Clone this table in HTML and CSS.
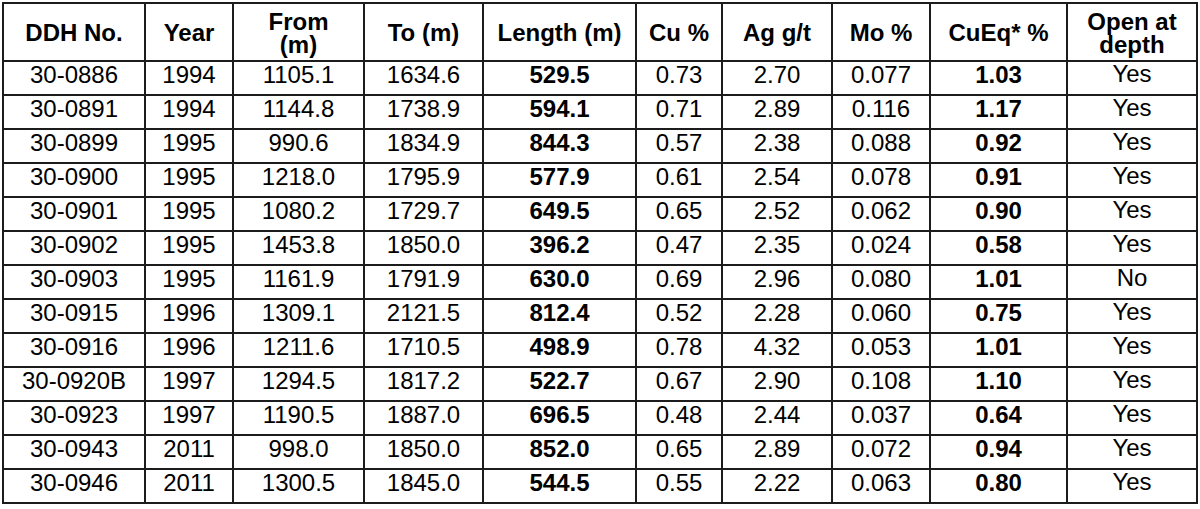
FILE: index.html
```html
<!DOCTYPE html>
<html>
<head>
<meta charset="utf-8">
<link rel="stylesheet" href="styles.css">
</head>
<body>
<table class="drill">
  <colgroup>
    <col class="c-ddh"><col class="c-year"><col class="c-from"><col class="c-to"><col class="c-len">
    <col class="c-cu"><col class="c-ag"><col class="c-mo"><col class="c-cueq"><col class="c-open">
  </colgroup>
  <thead>
    <tr>
      <th>DDH No.</th><th>Year</th><th>From<br>(m)</th><th>To (m)</th><th>Length (m)</th>
      <th>Cu %</th><th>Ag g/t</th><th>Mo %</th><th>CuEq* %</th><th>Open at<br>depth</th>
    </tr>
  </thead>
  <tbody>
    <tr><td>30-0886</td><td>1994</td><td>1105.1</td><td>1634.6</td><td class="b">529.5</td><td>0.73</td><td>2.70</td><td>0.077</td><td class="b">1.03</td><td class="open">Yes</td></tr>
    <tr><td>30-0891</td><td>1994</td><td>1144.8</td><td>1738.9</td><td class="b">594.1</td><td>0.71</td><td>2.89</td><td>0.116</td><td class="b">1.17</td><td class="open">Yes</td></tr>
    <tr><td>30-0899</td><td>1995</td><td>990.6</td><td>1834.9</td><td class="b">844.3</td><td>0.57</td><td>2.38</td><td>0.088</td><td class="b">0.92</td><td class="open">Yes</td></tr>
    <tr><td>30-0900</td><td>1995</td><td>1218.0</td><td>1795.9</td><td class="b">577.9</td><td>0.61</td><td>2.54</td><td>0.078</td><td class="b">0.91</td><td class="open">Yes</td></tr>
    <tr><td>30-0901</td><td>1995</td><td>1080.2</td><td>1729.7</td><td class="b">649.5</td><td>0.65</td><td>2.52</td><td>0.062</td><td class="b">0.90</td><td class="open">Yes</td></tr>
    <tr><td>30-0902</td><td>1995</td><td>1453.8</td><td>1850.0</td><td class="b">396.2</td><td>0.47</td><td>2.35</td><td>0.024</td><td class="b">0.58</td><td class="open">Yes</td></tr>
    <tr><td>30-0903</td><td>1995</td><td>1161.9</td><td>1791.9</td><td class="b">630.0</td><td>0.69</td><td>2.96</td><td>0.080</td><td class="b">1.01</td><td class="open">No</td></tr>
    <tr><td>30-0915</td><td>1996</td><td>1309.1</td><td>2121.5</td><td class="b">812.4</td><td>0.52</td><td>2.28</td><td>0.060</td><td class="b">0.75</td><td class="open">Yes</td></tr>
    <tr><td>30-0916</td><td>1996</td><td>1211.6</td><td>1710.5</td><td class="b">498.9</td><td>0.78</td><td>4.32</td><td>0.053</td><td class="b">1.01</td><td class="open">Yes</td></tr>
    <tr><td>30-0920B</td><td>1997</td><td>1294.5</td><td>1817.2</td><td class="b">522.7</td><td>0.67</td><td>2.90</td><td>0.108</td><td class="b">1.10</td><td class="open">Yes</td></tr>
    <tr><td>30-0923</td><td>1997</td><td>1190.5</td><td>1887.0</td><td class="b">696.5</td><td>0.48</td><td>2.44</td><td>0.037</td><td class="b">0.64</td><td class="open">Yes</td></tr>
    <tr><td>30-0943</td><td>2011</td><td>998.0</td><td>1850.0</td><td class="b">852.0</td><td>0.65</td><td>2.89</td><td>0.072</td><td class="b">0.94</td><td class="open">Yes</td></tr>
    <tr><td>30-0946</td><td>2011</td><td>1300.5</td><td>1845.0</td><td class="b">544.5</td><td>0.55</td><td>2.22</td><td>0.063</td><td class="b">0.80</td><td class="open">Yes</td></tr>
  </tbody>
</table>
</body>
</html>
```

FILE: styles.css
```css
html, body {
  margin: 0;
  padding: 0;
  background: #ffffff;
}

body {
  padding: 2px 0 0 2px;
  font-family: "Liberation Sans", Arial, sans-serif;
  color: #000;
}

.drill {
  border-collapse: collapse;
  table-layout: fixed;
  width: 1196px;
  border: 2px solid #1c1c1c;
}

.c-ddh { width: 142px; }
.c-year { width: 88px; }
.c-from { width: 131px; }
.c-to { width: 119px; }
.c-len { width: 153px; }
.c-cu { width: 86px; }
.c-ag { width: 110px; }
.c-mo { width: 98px; }
.c-cueq { width: 137px; }
.c-open { width: 130px; }

.drill th,
.drill td {
  border: 2px solid #1c1c1c;
  text-align: center;
  padding: 0;
  font-size: 24px;
}

.drill th {
  height: 55px;
  line-height: 23px;
  font-weight: bold;
  vertical-align: middle;
  padding-top: 1px;
}

.drill td {
  height: 31px;
  line-height: 24px;
  vertical-align: top;
  padding-top: 1px;
}

.drill td.b {
  font-weight: bold;
}

.drill td.open {
  padding-top: 0;
  height: 32px;
}
```
